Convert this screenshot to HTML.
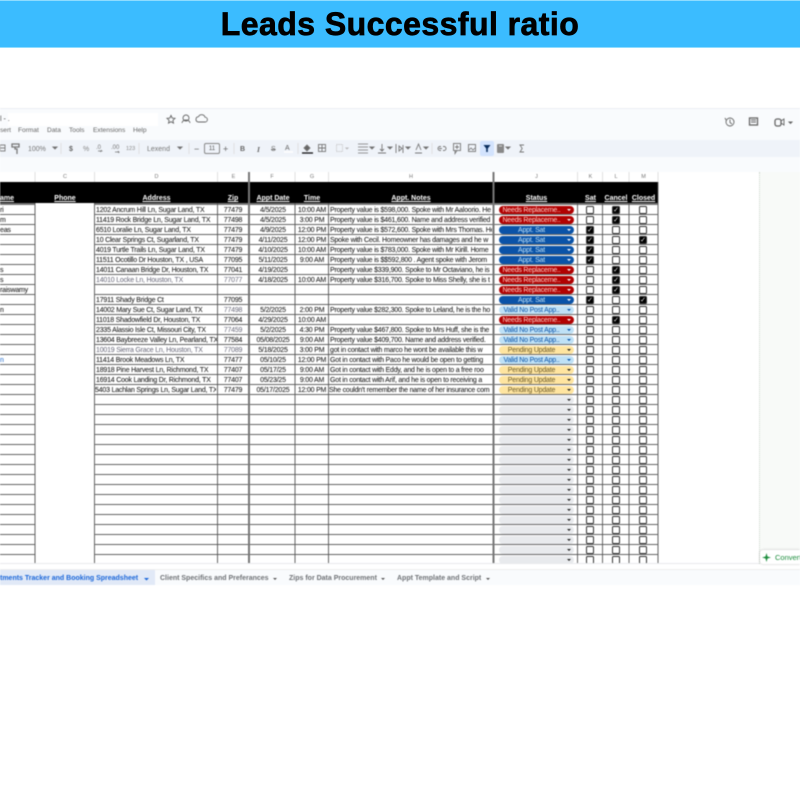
<!DOCTYPE html>
<html><head><meta charset="utf-8"><style>
*{box-sizing:border-box}
html,body{margin:0;padding:0;width:800px;height:800px;overflow:hidden;background:#fff;font-family:"Liberation Sans",sans-serif}
.abs{position:absolute}
#banner{position:absolute;left:0;top:0;width:800px;height:48px;background:#3bbcff;border-top:1px solid #8fdcff;border-bottom:1px solid #8fdcff;text-align:center;font:bold 32px/46px "Liberation Sans",sans-serif;color:#000;-webkit-text-stroke:.7px #000;letter-spacing:.45px}
#sheet{position:absolute;left:0;top:108px;width:800px;height:477px;filter:blur(.42px);overflow:hidden}
.t{position:absolute;white-space:nowrap;color:#444}
.hd{position:absolute;top:85px;color:#fff;font:bold 7px/11px "Liberation Sans",sans-serif;text-decoration:underline;text-align:center;white-space:nowrap}
.cl{position:absolute;top:64px;color:#777;font-size:5.5px;line-height:11px;text-align:center}
.r{position:absolute;left:0;width:800px;height:10px;font-size:7px;letter-spacing:-.2px;line-height:11.5px;color:#2a2a2a;-webkit-text-stroke:.1px #2a2a2a}
.r span{position:absolute;top:0;white-space:nowrap;overflow:hidden;height:11px}
.a{left:0;width:34px}
.d{left:96px;width:121px}
.e{left:218px;width:30px;text-align:center}
.f{left:251px;width:44px;text-align:center}
.g{left:296px;width:32px;text-align:center}
.h{left:330px;width:162px}
.r .p{left:499px;width:75px;height:8px;top:1px;border-radius:4px;font-size:7px;line-height:9px;text-align:center;padding-right:10px;-webkit-text-stroke:0}
.p:after{content:"";position:absolute;right:3px;top:3px;border:2.2px solid transparent;border-top:2.6px solid #222;border-bottom:0}
.n{background:#b10202;color:#ffcfc9}
.n:after,.s:after{border-top-color:#fff}
.s{background:#0a53a8;color:#bfe1f6}
.v{background:#bfe1f6;color:#0a53a8}
.v:after{border-top-color:#0a53a8}
.u{background:#ffe5a0;color:#6b5a2a}
.x{background:#e8eaed;color:#222}
.r .b{top:1px;width:8px;height:8px;border:1px solid #333;border-radius:1.5px;background:#fff}
.k{left:586px}.l{left:612px}.m{left:639px}
.r .c{background:#000;color:#fff;font-size:7px;line-height:7px;text-align:center;overflow:hidden;letter-spacing:0}
.tab{position:absolute;top:464px;height:14px;line-height:14px;font-size:7px;font-weight:bold;color:#6f7276;white-space:nowrap}
</style></head><body>
<div id="banner">Leads Successful ratio</div>
<div id="sheet">
<div class="abs" style="left:0;top:0;width:800px;height:64px;background:#f9fbfd;border-top:1px solid #eceff3"></div>
<div class="abs" style="left:8px;top:5px;width:150px;height:13px;background:#fff"></div>
<div class="t" style="left:0;top:7px;font-size:7px;line-height:10px">l - .</div>
<div class="t" style="left:0;top:17px;font-size:6.6px;line-height:11px;color:#666">sert</div>
<div class="t" style="left:18px;top:17px;font-size:6.6px;line-height:11px;color:#666">Format</div>
<div class="t" style="left:47px;top:17px;font-size:6.6px;line-height:11px;color:#666">Data</div>
<div class="t" style="left:69px;top:17px;font-size:6.6px;line-height:11px;color:#666">Tools</div>
<div class="t" style="left:93px;top:17px;font-size:6.6px;line-height:11px;color:#666">Extensions</div>
<div class="t" style="left:133px;top:17px;font-size:6.6px;line-height:11px;color:#666">Help</div>
<svg class="abs" style="left:0;top:0" width="800" height="64" fill="none" stroke="#666" stroke-width=".9">
<path d="M171 7.5l1.2 2.6 2.8.3-2.1 1.9.6 2.8-2.5-1.4-2.5 1.4.6-2.8-2.1-1.9 2.8-.3z"/>
<circle cx="186" cy="10" r="3"/><path d="M182 15a4 3 0 0 1 8 0"/>
<path d="M198 14h7a2.4 2.4 0 0 0 0-4.8 3.5 3.5 0 0 0-6.5-.5 2.7 2.7 0 0 0-.5 5.300z"/>
<circle cx="730" cy="14" r="4"/><path d="M730 11.500v3l2 1.500M725 10l1 2"/>
<rect x="749.500" y="10" width="8" height="7" stroke-width="1.300"/><path d="M751 12h5M751 14h5"/>
<rect x="775" y="11" width="6" height="7" rx="2" stroke-width="1.300"/><path d="M781 13l3-2v6l-3-2"/>
<path d="M789 14h3l-1.500 1.500z" fill="#555"/>
</svg>
<div class="abs" style="left:0;top:32px;width:800px;height:17px;background:#eff3f9"></div>
<div class="t" style="left:28px;top:36px;font-size:7px;line-height:11px;color:#777">100%</div>
<div class="t" style="left:69px;top:36px;font-size:7px;line-height:11px;color:#666;font-weight:bold">$</div>
<div class="t" style="left:83px;top:36px;font-size:7px;line-height:11px;color:#888">%</div>
<div class="t" style="left:96px;top:35px;font-size:6px;line-height:10px;color:#777">.0</div>
<div class="t" style="left:111px;top:35px;font-size:6px;line-height:10px;color:#777">.00</div>
<div class="t" style="left:126px;top:36px;font-size:5.500px;line-height:11px;color:#888">123</div>
<div class="t" style="left:147px;top:36px;font-size:7px;line-height:11px;color:#777">Lexend</div>
<div class="abs" style="left:204px;top:35px;width:16px;height:11px;border:1px solid #888;border-radius:2px;font-size:6px;line-height:10px;text-align:center;color:#555">11</div>
<div class="t" style="left:194px;top:35px;font-size:9px;line-height:12px;color:#666">−</div>
<div class="t" style="left:223px;top:35px;font-size:9px;line-height:12px;color:#666">+</div>
<div class="t" style="left:240px;top:36px;font-size:7px;line-height:11px;font-weight:bold;color:#666">B</div>
<div class="t" style="left:257px;top:36px;font-size:7.500px;line-height:11px;font-style:italic;color:#666;font-family:'Liberation Serif',serif;font-weight:bold">I</div>
<div class="t" style="left:271px;top:36px;font-size:7px;line-height:11px;color:#777;text-decoration:line-through">S</div>
<div class="t" style="left:285px;top:35px;font-size:7px;line-height:11px;color:#666">A</div>
<svg class="abs" style="left:0;top:32px" width="800" height="17" fill="none" stroke="#777" stroke-width=".9">
<rect x="0" y="5" width="5" height="6"/><path d="M0 8h5"/>
<path d="M12 4h7v3h-7zM15 7v2h2v5" stroke-width="1.300"/>
<path d="M53 7l2 2 2-2z" fill="#666"/><path d="M61 3v11M139 3v11M189 3v11M234 3v11M298 3v11" stroke="#ddd"/>
<path d="M98 11h4l-1-1M100 11l1 1M115 12h4l-1-1M118 12l1 1" stroke-width=".7"/>
<path d="M178 7l2 2 2-2z" fill="#666"/>
<path d="M284 12h9" stroke="#fff" stroke-width="1.500"/>
<path d="M302 13h11" stroke="#111" stroke-width="1.300"/><path d="M304 8l3-3 3 3-3 3z" fill="#666"/>
<rect x="318.500" y="4.500" width="7" height="7"/><path d="M318.500 8h7M322 4.500v7"/>
<rect x="336.500" y="4.500" width="6" height="7" stroke="#bbb" stroke-dasharray="1 1"/><path d="M346 8h2l-1 1z" fill="#999" stroke="#bbb"/>
<path d="M358 4h10M358 7h10M358 10h10M358 13h10" stroke-width=".8"/><path d="M370 7l2 2 2-2z" fill="#666"/>
<path d="M378 13h8M382 4v7M380 9l2 2 2-2" stroke-width=".9"/><path d="M388 7l2 2 2-2z" fill="#666"/>
<path d="M396 4v9M399 6l3 2.500-3 2.500zM403 5v8" stroke-width=".9"/><path d="M406 7l2 2 2-2z" fill="#666"/>
<path d="M415 13h7M416 10l2.500-6 2.500 6" stroke-width=".9"/><path d="M424 7l2 2 2-2z" fill="#666"/>
<path d="M432 3v11" stroke="#ddd"/>
<path d="M439 8.500h3M441 6.500h-1a2 2 0 0 0 0 4h1M443 6.500h1a2 2 0 0 1 0 4h-1" stroke-width=".9"/>
<rect x="453.500" y="3.500" width="7" height="7"/><path d="M457 5v4M455 7h4M455 10.500v3l2-3"/>
<rect x="468.500" y="4.500" width="7" height="7"/><path d="M469 10l2-2 2 2 2-2" stroke-width=".8"/>
<rect x="480" y="1" width="14" height="15" rx="2" fill="#d3e3fd" stroke="none"/>
<path d="M483.500 5h7l-2.700 3.500V12h-1.600V8.500z" fill="#0b2f5f" stroke="none"/>
<rect x="497" y="4" width="7" height="9" rx="1" fill="#888" stroke="none"/><path d="M499 6h3" stroke="#ddd"/><path d="M506 7l2 2 2-2z" fill="#666"/>
<path d="M524 5h-4l2.200 3.500-2.200 3.500h4" stroke-width=".9"/>
</svg>
<div class="cl" style="left:35px;width:60px">C</div><div class="cl" style="left:95px;width:123px">D</div><div class="cl" style="left:218px;width:31px">E</div><div class="cl" style="left:249px;width:46px">F</div><div class="cl" style="left:295px;width:34px">G</div><div class="cl" style="left:329px;width:164px">H</div><div class="cl" style="left:495px;width:83px">J</div><div class="cl" style="left:578px;width:25px">K</div><div class="cl" style="left:603px;width:26px">L</div><div class="cl" style="left:629px;width:29px">M</div>
<div class="abs" style="left:0;top:74px;width:658px;height:21px;background:#000"></div>
<div class="abs" style="left:0;top:95px;width:658px;height:2px;background:#777"></div>
<div class="hd" style="left:0;width:14px">ame</div><div class="hd" style="left:35px;width:60px">Phone</div><div class="hd" style="left:95px;width:123px">Address</div><div class="hd" style="left:218px;width:30px">Zip</div><div class="hd" style="left:251px;width:44px">Appt Date</div><div class="hd" style="left:295px;width:34px">Time</div><div class="hd" style="left:329px;width:164px">Appt. Notes</div><div class="hd" style="left:495px;width:83px">Status</div><div class="hd" style="left:578px;width:25px">Sat</div><div class="hd" style="left:603px;width:26px">Cancel</div><div class="hd" style="left:629px;width:29px">Closed</div>
<div class="abs" style="left:0;top:97px;width:658px;height:358px;background:repeating-linear-gradient(to bottom,transparent 0,transparent 9px,#666 9px,#666 10px)"></div>
<div class="abs" style="left:35px;top:95px;width:59.500px;height:360px;background:#fff"></div>
<svg class="abs" style="left:0;top:64px" width="660" height="392" fill="none" stroke="#555" stroke-width=".9">
<path d="M35 31v360M94.500 31v360M217.500 31v360M295 31v360M328.500 31v360M577.500 31v360M602.500 31v360M629 31v360M658 10v381" />
<path d="M35 0v10M94.500 0v10M217.500 0v10M295 0v10M328.500 0v10M577.500 0v10M602.500 0v10M629 0v10M658 0v10" stroke="#ddd"/>
<path d="M249 0v392M493.500 0v392" stroke="#777" stroke-width="2"/>
</svg>
<div class="r" style="top:97px"><span class="a">ri</span><span class="d">1202 Ancrum Hill Ln, Sugar Land, TX</span><span class="e">77479</span><span class="f">4/5/2025</span><span class="g">10:00 AM</span><span class="h">Property value is $598,000. Spoke with Mr Aaloorio. He</span><span class="p n">Needs Replaceme..</span><span class="b k"></span><span class="b l c">✓</span><span class="b m"></span></div>
<div class="r" style="top:107px"><span class="a">m</span><span class="d">11419 Rock Bridge Ln, Sugar Land, TX</span><span class="e">77498</span><span class="f">4/5/2025</span><span class="g">3:00 PM</span><span class="h">Property value is $461,600. Name and address verified</span><span class="p n">Needs Replaceme..</span><span class="b k"></span><span class="b l c">✓</span><span class="b m"></span></div>
<div class="r" style="top:117px"><span class="a">eas</span><span class="d">6510 Loralie Ln, Sugar Land, TX</span><span class="e">77479</span><span class="f">4/9/2025</span><span class="g">12:00 PM</span><span class="h">Property value is $572,600. Spoke with Mrs Thomas. He</span><span class="p s">Appt. Sat</span><span class="b k c">✓</span><span class="b l"></span><span class="b m"></span></div>
<div class="r" style="top:127px"><span class="d">10 Clear Springs Ct, Sugarland, TX</span><span class="e">77479</span><span class="f">4/11/2025</span><span class="g">12:00 PM</span><span class="h">Spoke with Cecil. Homeowner has damages and  he w</span><span class="p s">Appt. Sat</span><span class="b k c">✓</span><span class="b l"></span><span class="b m c">✓</span></div>
<div class="r" style="top:137px"><span class="d">4019 Turtle Trails Ln, Sugar Land, TX</span><span class="e">77479</span><span class="f">4/10/2025</span><span class="g">10:00 AM</span><span class="h">Property value is $783,000. Spoke with Mr Kirill. Home</span><span class="p s">Appt. Sat</span><span class="b k c">✓</span><span class="b l"></span><span class="b m"></span></div>
<div class="r" style="top:147px"><span class="d">11511 Ocotillo Dr Houston, TX , USA</span><span class="e">77095</span><span class="f">5/11/2025</span><span class="g">9:00 AM</span><span class="h">Property value is $$592,800 . Agent spoke with Jerom</span><span class="p s">Appt. Sat</span><span class="b k c">✓</span><span class="b l"></span><span class="b m"></span></div>
<div class="r" style="top:157px"><span class="a">s</span><span class="d">14011 Canaan Bridge Dr, Houston, TX</span><span class="e">77041</span><span class="f">4/19/2025</span><span class="g"></span><span class="h">Property value $339,900. Spoke to Mr Octaviano, he is</span><span class="p n">Needs Replaceme..</span><span class="b k"></span><span class="b l c">✓</span><span class="b m"></span></div>
<div class="r" style="top:167px"><span class="a">s</span><span class="d" style="color:#667;-webkit-text-stroke:0">14010 Locke Ln, Houston, TX</span><span class="e" style="color:#667;-webkit-text-stroke:0">77077</span><span class="f">4/18/2025</span><span class="g">10:00 AM</span><span class="h">Property value $316,700. Spoke to Miss Shelly, she is t</span><span class="p n">Needs Replaceme..</span><span class="b k"></span><span class="b l c">✓</span><span class="b m"></span></div>
<div class="r" style="top:177px"><span class="a">raiswamy</span><span class="p n">Needs Replaceme..</span><span class="b k"></span><span class="b l c">✓</span><span class="b m"></span></div>
<div class="r" style="top:187px"><span class="d">17911 Shady Bridge Ct</span><span class="e">77095</span><span class="p s">Appt. Sat</span><span class="b k c">✓</span><span class="b l"></span><span class="b m c">✓</span></div>
<div class="r" style="top:197px"><span class="a">n</span><span class="d">14002 Mary Sue Ct, Sugar Land, TX</span><span class="e" style="color:#667;-webkit-text-stroke:0">77498</span><span class="f">5/2/2025</span><span class="g">2:00 PM</span><span class="h">Property value $282,300. Spoke to Leland, he is the ho</span><span class="p v">Valid No Post App..</span><span class="b k"></span><span class="b l"></span><span class="b m"></span></div>
<div class="r" style="top:207px"><span class="d">11018 Shadowfield Dr, Houston, TX</span><span class="e">77064</span><span class="f">4/29/2025</span><span class="g">10:00 AM</span><span class="p n">Needs Replaceme..</span><span class="b k"></span><span class="b l c">✓</span><span class="b m"></span></div>
<div class="r" style="top:217px"><span class="d">2335 Alassio Isle Ct, Missouri City, TX</span><span class="e" style="color:#667;-webkit-text-stroke:0">77459</span><span class="f">5/2/2025</span><span class="g">4:30 PM</span><span class="h">Property value $467,800. Spoke to Mrs Huff, she is the</span><span class="p v">Valid No Post App..</span><span class="b k"></span><span class="b l"></span><span class="b m"></span></div>
<div class="r" style="top:227px"><span class="d">13604 Baybreeze Valley Ln, Pearland, TX</span><span class="e">77584</span><span class="f">05/08/2025</span><span class="g">9:00 AM</span><span class="h">Property value $409,700. Name and address verified.</span><span class="p v">Valid No Post App..</span><span class="b k"></span><span class="b l"></span><span class="b m"></span></div>
<div class="r" style="top:237px"><span class="d" style="color:#667;-webkit-text-stroke:0">10019 Sierra Grace Ln, Houston, TX</span><span class="e" style="color:#667;-webkit-text-stroke:0">77089</span><span class="f">5/18/2025</span><span class="g">3:00 PM</span><span class="h">got in contact with marco he wont be available this w</span><span class="p u">Pending Update</span><span class="b k"></span><span class="b l"></span><span class="b m"></span></div>
<div class="r" style="top:247px"><span class="a" style="color:#1a66c9;-webkit-text-stroke:0">n</span><span class="d">11414 Brook Meadows Ln, TX</span><span class="e">77477</span><span class="f">05/10/25</span><span class="g">12:00 PM</span><span class="h">Got in contact with Paco he would be open to getting</span><span class="p v">Valid No Post App..</span><span class="b k"></span><span class="b l"></span><span class="b m"></span></div>
<div class="r" style="top:257px"><span class="d">18918 Pine Harvest Ln, Richmond, TX</span><span class="e">77407</span><span class="f">05/17/25</span><span class="g">9:00 AM</span><span class="h">Got in contact with Eddy, and he is open to a free roo</span><span class="p u">Pending Update</span><span class="b k"></span><span class="b l"></span><span class="b m"></span></div>
<div class="r" style="top:267px"><span class="d">16914 Cook Landing Dr, Richmond, TX</span><span class="e">77407</span><span class="f">05/23/25</span><span class="g">9:00 AM</span><span class="h">Got in contact with Arif, and he is open to receiving a</span><span class="p u">Pending Update</span><span class="b k"></span><span class="b l"></span><span class="b m"></span></div>
<div class="r" style="top:277px"><span class="d" style="left:95px">5403 Lachlan Springs Ln, Sugar Land, TX</span><span class="e">77479</span><span class="f">05/17/2025</span><span class="g">12:00 PM</span><span class="h" style="left:329px">She couldn't remember the name of her insurance com</span><span class="p u">Pending Update</span><span class="b k"></span><span class="b l"></span><span class="b m"></span></div>
<div class="r" style="top:287px"><span class="p x"></span><span class="b k"></span><span class="b l"></span><span class="b m"></span></div>
<div class="r" style="top:297px"><span class="p x"></span><span class="b k"></span><span class="b l"></span><span class="b m"></span></div>
<div class="r" style="top:307px"><span class="p x"></span><span class="b k"></span><span class="b l"></span><span class="b m"></span></div>
<div class="r" style="top:317px"><span class="p x"></span><span class="b k"></span><span class="b l"></span><span class="b m"></span></div>
<div class="r" style="top:327px"><span class="p x"></span><span class="b k"></span><span class="b l"></span><span class="b m"></span></div>
<div class="r" style="top:337px"><span class="p x"></span><span class="b k"></span><span class="b l"></span><span class="b m"></span></div>
<div class="r" style="top:347px"><span class="p x"></span><span class="b k"></span><span class="b l"></span><span class="b m"></span></div>
<div class="r" style="top:357px"><span class="p x"></span><span class="b k"></span><span class="b l"></span><span class="b m"></span></div>
<div class="r" style="top:367px"><span class="p x"></span><span class="b k"></span><span class="b l"></span><span class="b m"></span></div>
<div class="r" style="top:377px"><span class="p x"></span><span class="b k"></span><span class="b l"></span><span class="b m"></span></div>
<div class="r" style="top:387px"><span class="p x"></span><span class="b k"></span><span class="b l"></span><span class="b m"></span></div>
<div class="r" style="top:397px"><span class="p x"></span><span class="b k"></span><span class="b l"></span><span class="b m"></span></div>
<div class="r" style="top:407px"><span class="p x"></span><span class="b k"></span><span class="b l"></span><span class="b m"></span></div>
<div class="r" style="top:417px"><span class="p x"></span><span class="b k"></span><span class="b l"></span><span class="b m"></span></div>
<div class="r" style="top:427px"><span class="p x"></span><span class="b k"></span><span class="b l"></span><span class="b m"></span></div>
<div class="r" style="top:437px"><span class="p x"></span><span class="b k"></span><span class="b l"></span><span class="b m"></span></div>
<div class="r" style="top:447px"><span class="p x"></span><span class="b k"></span><span class="b l"></span><span class="b m"></span></div>
<div class="abs" style="left:0;top:455px;width:800px;height:8px;background:#fff;border-top:1px solid #e8eaed"></div>
<div class="abs" style="left:759px;top:64px;width:41px;height:392px;background:#f8faf8;border-left:1px dotted #cfd8cf"></div>
<div class="abs" style="left:760px;top:442px;width:40px;height:14px;background:#fff;border-radius:3px 0 0 3px;box-shadow:0 0 2px rgba(0,0,0,.25);color:#1e8e3e;font-size:7.500px;line-height:15px;padding-left:15px;white-space:nowrap;overflow:hidden">Convert</div>
<svg class="abs" style="left:762px;top:445px" width="9" height="9"><path d="M4.500 0l1 3.500 3.500 1-3.500 1-1 3.500-1-3.500-3.500-1 3.500-1z" fill="#1e8e3e"/></svg>
<div class="abs" style="left:0;top:461px;width:800px;height:16px;background:#f9fbfd;border-top:1px solid #eee"></div>
<div class="abs" style="left:0;top:462px;width:155px;height:15px;background:#e1e9f7"></div>
<div class="tab" style="left:0;color:#1a66d9">tments Tracker and Booking Spreadsheet</div>
<div class="tab" style="left:160px">Client Specifics and Preferances</div>
<div class="tab" style="left:289px">Zips for Data Procurement</div>
<div class="tab" style="left:397px">Appt Template and Script</div>
<svg class="abs" style="left:0;top:464px" width="500" height="14" fill="#555"><path d="M144 6h5l-2.500 2.500z" fill="#1a66d9"/><path d="M273 6h4l-2 2zM381 6h4l-2 2zM486 6h4l-2 2z"/></svg>
</div>
</body></html>
